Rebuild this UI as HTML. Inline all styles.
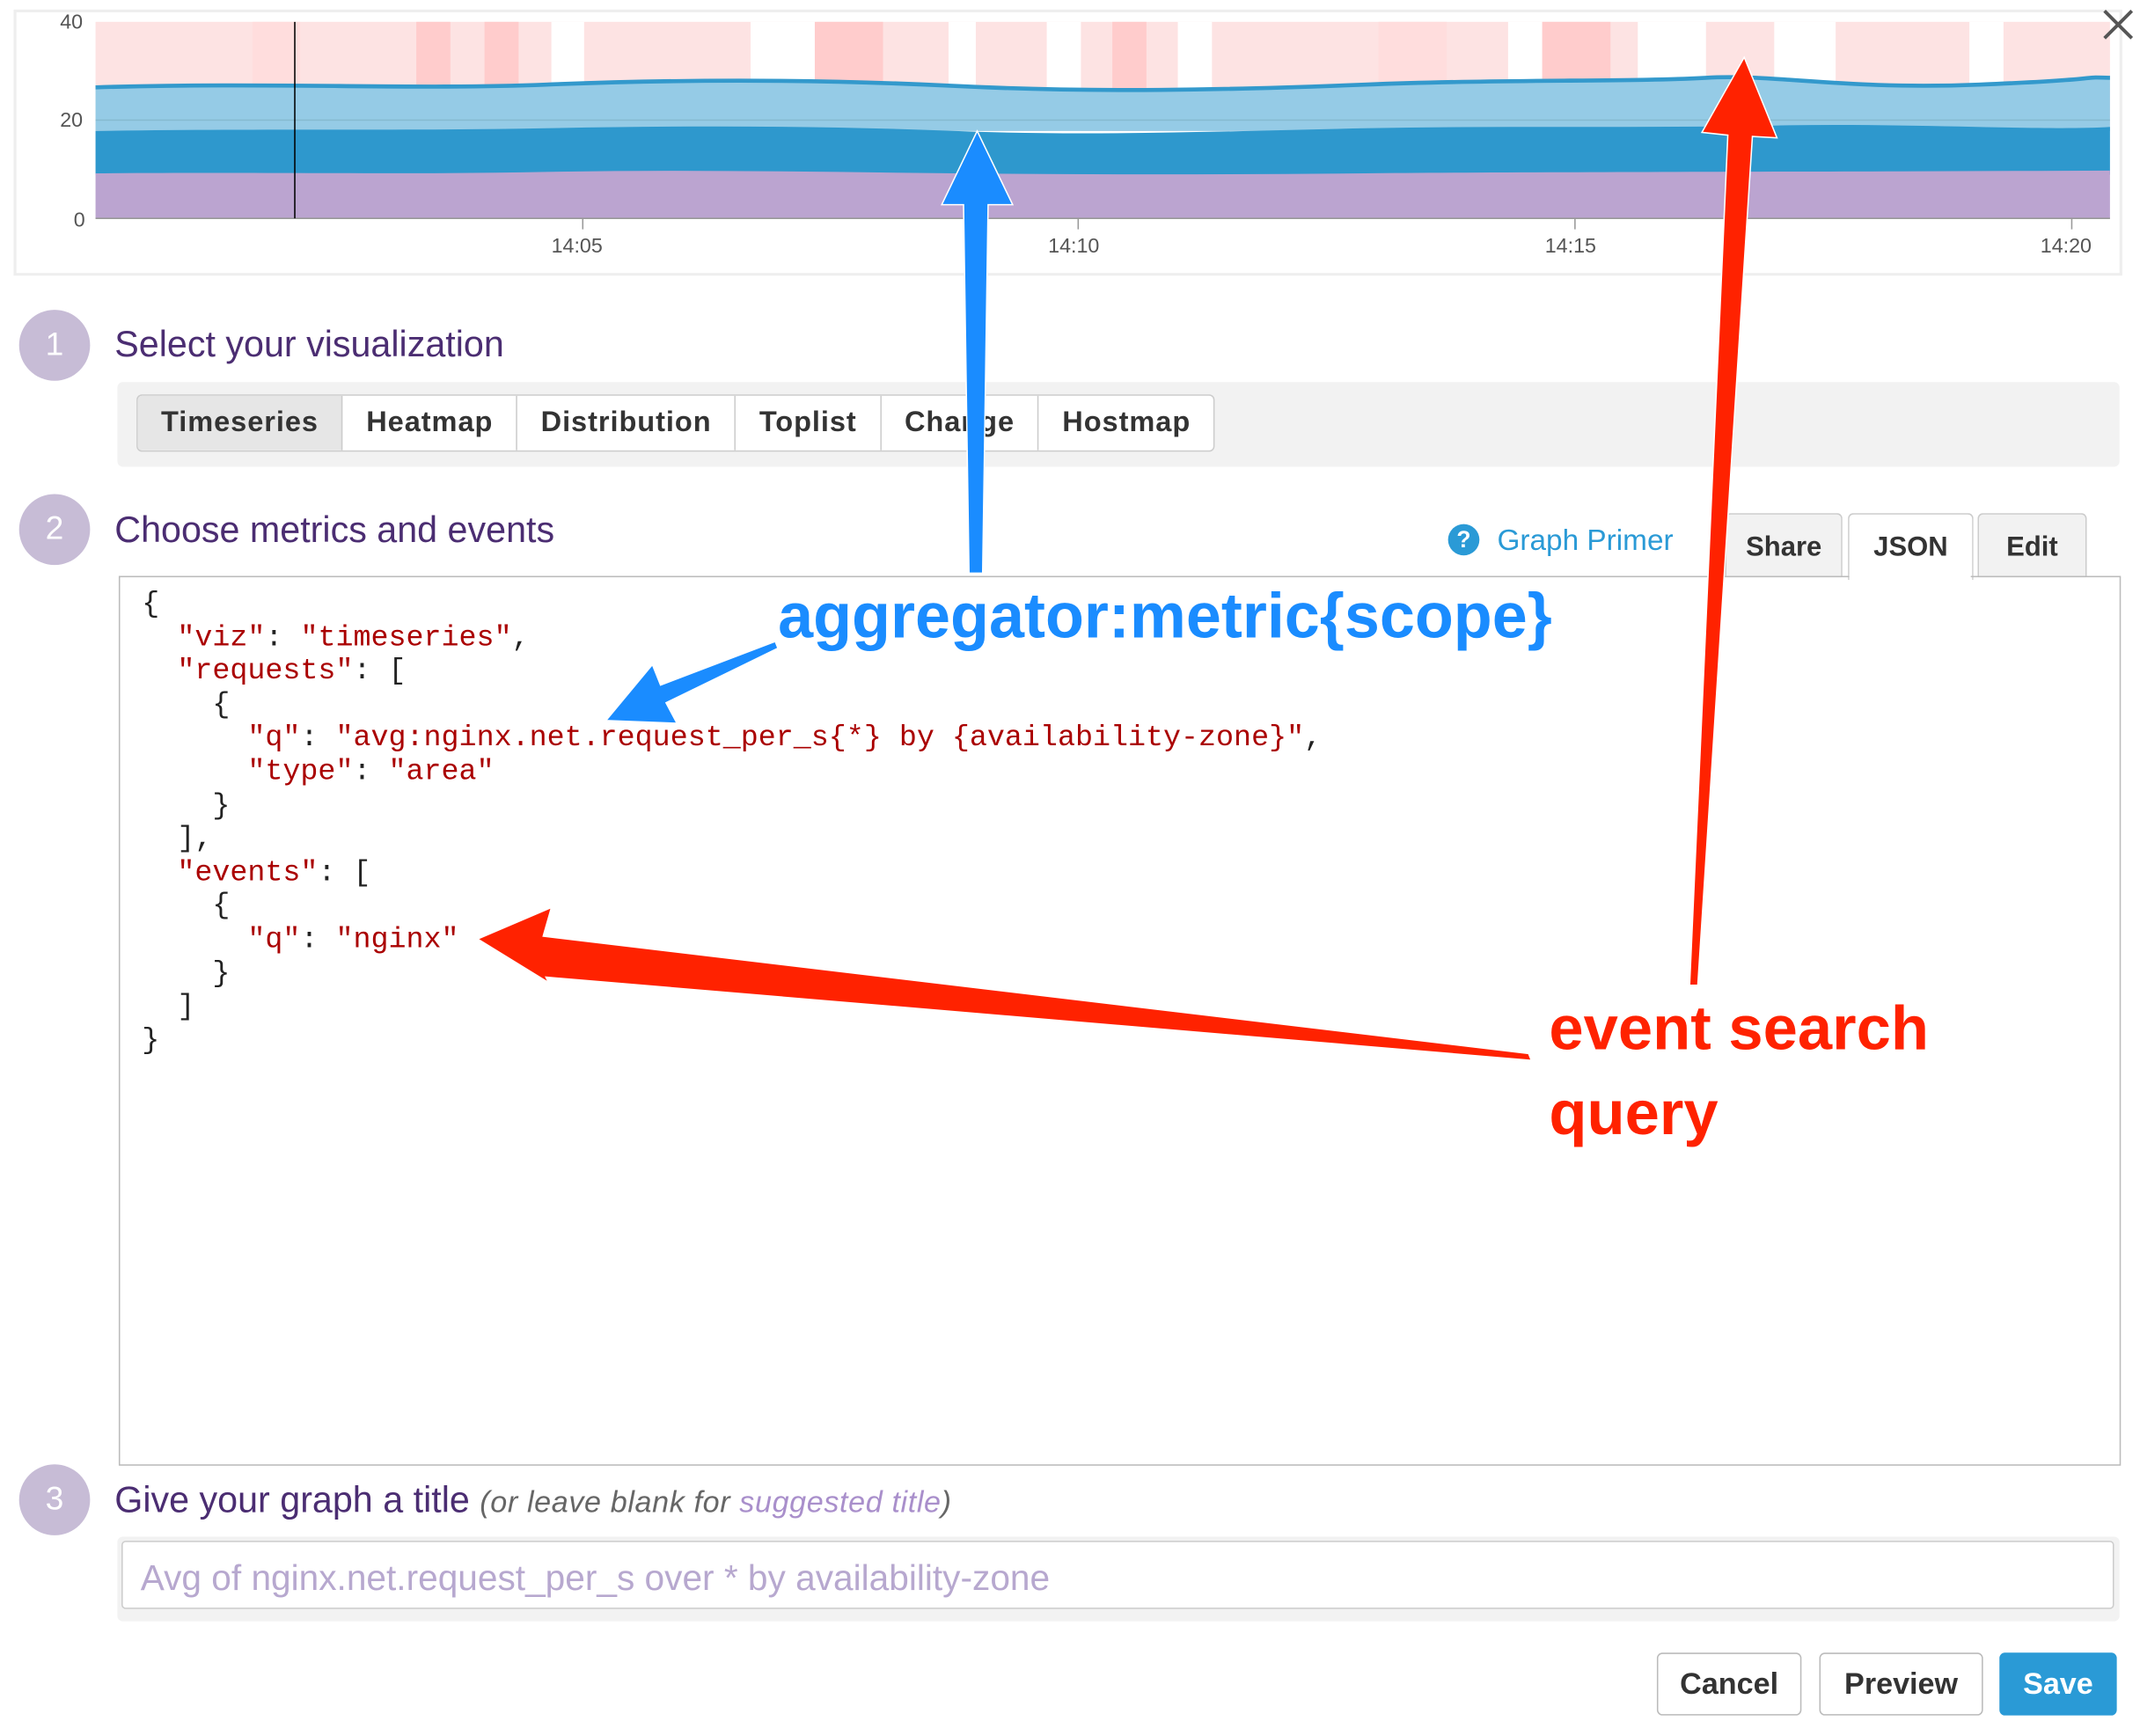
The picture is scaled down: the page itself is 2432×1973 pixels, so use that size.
<!DOCTYPE html>
<html><head><meta charset="utf-8"><style>
html,body{margin:0;padding:0;background:#fff;width:2432px;height:1972px;overflow:hidden}
#w{position:absolute;left:0;top:0;width:1568px;height:1272px;transform:scale(1.55102);transform-origin:0 0;font-family:"Liberation Sans",sans-serif}
.abs{position:absolute}
.num{position:absolute;left:14px;width:52px;height:52px;border-radius:50%;background:#c7bcd6;color:#fff;font-size:24px;text-align:center;line-height:52px}
.h{position:absolute;left:84px;color:#4b2d72;font-size:26.6px}
.tabs{position:absolute;left:100px;top:289px;display:flex;border:1px solid #ccc;border-radius:4px;background:#fff;overflow:hidden}
.tabs div{padding:0 16px;height:40px;line-height:40px;font-size:21px;font-weight:bold;color:#333;border-right:1px solid #ccc;letter-spacing:.6px;padding:0 17px}
.tabs div:last-child{border-right:none}
.code{position:absolute;left:104px;top:431px;font-family:"Liberation Mono",monospace;font-size:21.5px;line-height:24.6px;color:#222;white-space:pre}
.s{color:#a00}
.btn{position:absolute;top:1211px;height:44px;line-height:44px;border:1px solid #bbb;border-radius:4px;font-size:22px;font-weight:bold;color:#333;text-align:center;background:#fff}
.rt{position:absolute;top:376px;height:46px;line-height:48px;border:1px solid #ccc;border-bottom:none;border-radius:4px 4px 0 0;background:#f2f2f2;font-size:20px;font-weight:bold;color:#333;text-align:center}
.ann{position:absolute;font-weight:bold;text-shadow:0 0 3px #fff,0 0 3px #fff,2px 2px 0 #fff,-2px -2px 0 #fff,2px -2px 0 #fff,-2px 2px 0 #fff}
</style></head><body><div id="w">
<svg class="abs" style="left:0;top:0" width="1568" height="210">
<rect x="11" y="8" width="1543" height="193" fill="none" stroke="#eee" stroke-width="2"/>
<g font-family="Liberation Sans" font-size="15" fill="#555">
<text x="44" y="21">40</text><text x="44" y="93">20</text><text x="54" y="166">0</text>
<text x="404" y="185">14:05</text><text x="768" y="185">14:10</text><text x="1132" y="185">14:15</text><text x="1495" y="185">14:20</text>
</g>
<rect x="70" y="16" width="1476" height="80" fill="#fde3e3"/>
<g fill="#fcc">
<rect x="185" y="16" width="35" height="80" fill="#fdd"/><rect x="305" y="16" width="25" height="80"/><rect x="355" y="16" width="25" height="80"/>
<rect x="404" y="16" width="24" height="80" fill="#fff"/><rect x="550" y="16" width="48" height="80" fill="#fff"/>
<rect x="597" y="16" width="50" height="80"/><rect x="695" y="16" width="20" height="80" fill="#fff"/><rect x="767" y="16" width="25" height="80" fill="#fff"/>
<rect x="815" y="16" width="25" height="80"/><rect x="863" y="16" width="25" height="80" fill="#fff"/><rect x="1010" y="16" width="50" height="80" fill="#fdd"/>
<rect x="1105" y="16" width="25" height="80" fill="#fff"/><rect x="1130" y="16" width="50" height="80"/><rect x="1200" y="16" width="50" height="80" fill="#fff"/>
<rect x="1300" y="16" width="45" height="80" fill="#fff"/><rect x="1443" y="16" width="25" height="80" fill="#fff"/>
</g>
<path d="M70 64 C200 60 300 66 400 62 S600 58 700 63 S900 66 1000 62 S1200 60 1250 57 S1350 66 1450 62 S1520 56 1546 57 L1546 96 L70 96Z" fill="#95cbe6"/>
<path d="M70 64 C200 60 300 66 400 62 S600 58 700 63 S900 66 1000 62 S1200 60 1250 57 S1350 66 1450 62 S1520 56 1546 57" fill="none" stroke="#3399cc" stroke-width="3"/>
<line x1="70" y1="88" x2="1546" y2="88" stroke="#7ab" stroke-width="1" opacity=".5"/>
<path d="M70 96 C200 94 300 96 400 94 S600 92 700 96 S900 96 1000 94 S1200 94 1300 92 S1500 96 1546 93 L1546 128 L70 128Z" fill="#2e98cd"/>
<path d="M70 127 C200 126 300 128 400 126 S600 126 700 127 S900 128 1000 127 S1300 126 1546 125 L1546 160 L70 160Z" fill="#bba4d0"/>
<line x1="70" y1="160" x2="1546" y2="160" stroke="#999"/>
<line x1="216" y1="16" x2="216" y2="160" stroke="#000"/>
<g stroke="#999"><line x1="427" y1="160" x2="427" y2="168"/><line x1="790" y1="160" x2="790" y2="168"/><line x1="1154" y1="160" x2="1154" y2="168"/><line x1="1518" y1="160" x2="1518" y2="168"/></g>
<path d="M1542 8 L1562 28 M1562 8 L1542 28" stroke="#555" stroke-width="2.5"/>
</svg>
<div class="num" style="top:227px">1</div><div class="h" style="top:237px">Select your visualization</div>
<div class="abs" style="left:86px;top:280px;width:1467px;height:62px;background:#f2f2f2;border-radius:4px"></div>
<div class="tabs"><div style="background:#e6e6e6">Timeseries</div><div>Heatmap</div><div>Distribution</div><div>Toplist</div><div>Change</div><div>Hostmap</div></div>
<div class="num" style="top:362px">2</div><div class="h" style="top:373px">Choose metrics and events</div>
<div class="abs" style="left:1061px;top:384px;width:23px;height:23px;border-radius:50%;background:#2a9ad6;color:#fff;font-weight:bold;font-size:17px;text-align:center;line-height:23px">?</div>
<div class="abs" style="left:1097px;top:384px;color:#2a9ad6;font-size:21.5px">Graph Primer</div>
<div class="rt" style="left:1264px;width:84px">Share</div>
<div class="rt" style="left:1354px;width:90px;background:#fff;height:48px">JSON</div>
<div class="rt" style="left:1449px;width:78px">Edit</div>
<div class="abs" style="left:87px;top:422px;width:1465px;height:650px;border:1px solid #bbb"></div>
<div class="abs" style="left:1355px;top:421px;width:89px;height:3px;background:#fff"></div>
<div class="code">{
  <span class="s">"viz"</span>: <span class="s">"timeseries"</span>,
  <span class="s">"requests"</span>: [
    {
      <span class="s">"q"</span>: <span class="s">"avg:nginx.net.request_per_s{*} by {availability-zone}"</span>,
      <span class="s">"type"</span>: <span class="s">"area"</span>
    }
  ],
  <span class="s">"events"</span>: [
    {
      <span class="s">"q"</span>: <span class="s">"nginx"</span>
    }
  ]
}</div>
<div class="num" style="top:1073px">3</div>
<div class="h" style="top:1084px">Give your graph a title <i style="font-size:22px;color:#666;letter-spacing:.4px">(or leave blank for <span style="color:#a98fcb">suggested title</span>)</i></div>
<div class="abs" style="left:86px;top:1126px;width:1467px;height:62px;background:#f2f2f2;border-radius:4px"></div>
<div class="abs" style="left:89px;top:1129px;height:50px;border:1px solid #ccc;background:#fff;border-radius:3px;color:#b7a8cf;font-size:26.2px;line-height:52px;padding-left:13px;box-sizing:border-box;width:1460px">Avg of nginx.net.request_per_s over * by availability-zone</div>
<div class="btn" style="left:1214px;width:104px">Cancel</div>
<div class="btn" style="left:1333px;width:118px">Preview</div>
<div class="btn" style="left:1465px;width:84px;background:#2a9ad6;border-color:#2a9ad6;color:#fff">Save</div>
<svg class="abs" style="left:0;top:0" width="1568" height="1272">
<g fill="#1a8cff" stroke="#fff" stroke-width="1">
<path d="M710 420 L720 420 L724 150 L742 150 L716 96 L690 150 L706 150 Z"/>
<path d="M570 475 L568 470 L484 502 L478 487 L444 528 L496 530 L488 515 Z"/>
</g>
<g fill="#ff2200" stroke="#fff" stroke-width="1">
<path d="M1238 722 L1244 722 L1284 100 L1302 101 L1278 42 L1247 97 L1266 99 Z"/>
<path d="M1120 772 L1122 777 L400 716 L402 720 L350 688 L404 665 L398 686 Z"/>
</g>
</svg>
<div class="ann" style="left:570px;top:424px;color:#1a8cff;font-size:46.4px">aggregator:metric{scope}</div>
<div class="ann" style="left:1135px;top:728px;color:#ff2200;font-size:45.5px">event search</div>
<div class="ann" style="left:1135px;top:790px;color:#ff2200;font-size:45.5px">query</div>
</div></body></html>
